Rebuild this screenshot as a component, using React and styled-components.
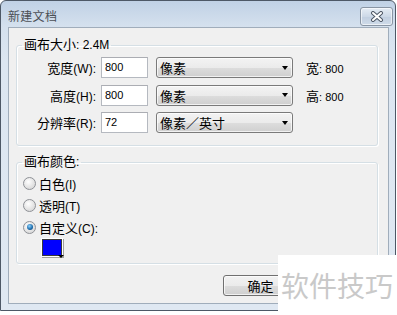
import React from "react";
import styled, { createGlobalStyle } from "styled-components";

const Global = createGlobalStyle`
  html, body {
    margin: 0;
    padding: 0;
    background: #ffffff;
  }
  body {
    font-family: "Liberation Sans", "Noto Sans CJK SC", sans-serif;
    font-size: 13px;
    color: #000;
  }
`;

const Page = styled.div`
  position: relative;
  width: 397px;
  height: 315px;
  overflow: hidden;
`;

const Window = styled.div`
  width: 394px;
  height: 309px;
  border: 1px solid #4d5866;
  border-radius: 6px 6px 0 0;
  background: linear-gradient(#c0d1e5, #d5e1ee 26px, #dce6f1 60px, #dfe8f2);
  display: flex;
  flex-direction: column;
`;

const TitleBar = styled.div`
  height: 26px;
  display: flex;
  align-items: center;
  justify-content: space-between;
  padding: 0 2px 0 7px;
`;

const Title = styled.span`
  font-size: 12px;
  color: #4b4f55;
  letter-spacing: 0.3px;
  margin-top: 3px;
`;

const CloseBtn = styled.div`
  width: 31px;
  height: 17px;
  margin-top: 4px;
  border: 1px solid #8995a4;
  border-radius: 3px;
  background: linear-gradient(#e6edf5, #cdd9e7 50%, #c1cfe0 51%, #cfdbe9);
  box-shadow: inset 0 0 0 1px rgba(255, 255, 255, 0.6);
  display: flex;
  align-items: center;
  justify-content: center;
`;

const Client = styled.div`
  flex: 1;
  margin: 0 6px 6px 7px;
  border: 1px solid #a0adbb;
  background: #f0f0f0;
  padding: 0 10px 0 7px;
  display: flex;
  flex-direction: column;
`;

const Group = styled.fieldset`
  margin: ${(p) => p.$top}px 0 0 0;
  padding: ${(p) => p.$pad};
  border: 1px solid #d5dfe5;
  border-radius: 3px;
  box-shadow: inset 1px 1px 0 #ffffff, 1px 1px 0 #ffffff;
  min-width: 0;
`;

const Legend = styled.legend`
  margin-left: 5px;
  padding: 0 2px;
  line-height: 16px;
  font-size: 13px;
`;

const Lat = styled.span`
  font-size: 12px;
`;

const Grid = styled.div`
  display: grid;
  grid-template-columns: 84px 47px 145px auto;
  grid-auto-rows: 21px;
  row-gap: 6.5px;
  align-items: center;
`;

const Label = styled.span`
  text-align: right;
  padding-right: 5px;
`;

const Input = styled.div`
  height: 19px;
  border: 1px solid #b5b9c0;
  border-top-color: #abadb3;
  background: #fff;
  font-size: 11px;
  line-height: 19px;
  padding-left: 3px;
`;

const Select = styled.div`
  margin-left: 8px;
  height: 19px;
  border: 1px solid #7a7a7a;
  border-radius: 3px;
  background: linear-gradient(#f3f3f3, #ebebeb 50%, #dddddd 51%, #cfcfcf);
  box-shadow: inset 0 0 0 1px rgba(255, 255, 255, 0.7);
  display: flex;
  align-items: center;
  justify-content: space-between;
  padding: 0 4px 0 3px;
`;

const Arrow = styled.span`
  width: 0;
  height: 0;
  border-left: 3.5px solid transparent;
  border-right: 3.5px solid transparent;
  border-top: 4px solid #000;
`;

const Info = styled.span`
  margin-left: 13px;
  & > span {
    font-size: 11px;
  }
`;

const RadioList = styled.div`
  display: flex;
  flex-direction: column;
  gap: 6px;
  padding-left: 6px;
`;

const RadioRow = styled.label`
  display: flex;
  align-items: center;
  height: 16px;
  gap: 3px;
`;

const RadioDot = styled.span`
  width: 11px;
  height: 11px;
  border-radius: 50%;
  border: 1px solid #8e9196;
  background: radial-gradient(circle at 40% 35%, #ffffff, #dcdcdc 70%, #f4f4f4);
  display: flex;
  align-items: center;
  justify-content: center;
  &::after {
    content: "";
    display: ${(p) => (p.$on ? "block" : "none")};
    width: 6px;
    height: 6px;
    border-radius: 50%;
    background: radial-gradient(circle at 40% 35%, #8cd2ff, #1b6aa8 60%, #0d3d6e);
  }
`;

const Swatch = styled.div`
  position: relative;
  width: 18px;
  height: 15px;
  margin: 4px 0 0 25px;
  background: #0000ff;
  border: 1px solid #3b3b3b;
  box-shadow: 0 0 0 1px #ffffff, 1px 1px 0 1px #a0a0a0;
`;

const SwatchArrow = styled.span`
  position: absolute;
  right: -3px;
  bottom: -3px;
  width: 0;
  height: 0;
  border-left: 3px solid transparent;
  border-right: 3px solid transparent;
  border-top: 3px solid #000;
`;

const Footer = styled.div`
  display: flex;
  margin-top: 11px;
  padding-left: 207px;
`;

const Button = styled.div`
  width: 73px;
  height: 19px;
  border: 1px solid #707070;
  border-radius: 3px;
  background: linear-gradient(#f2f2f2, #ebebeb 50%, #dddddd 51%, #cfcfcf);
  box-shadow: inset 0 0 0 1px rgba(255, 255, 255, 0.7);
  display: flex;
  align-items: center;
  justify-content: center;
  font-size: 13px;
`;

const Watermark = styled.div`
  position: absolute;
  left: 278px;
  top: 255px;
  width: 119px;
  height: 60px;
  background: #ffffff;
  display: flex;
  align-items: center;
  padding-left: 3px;
  box-sizing: border-box;
  font-family: "Noto Sans CJK SC", sans-serif;
  font-size: 28px;
  color: #c9c9c9;
`;

const rows = [
  { cn: "宽度", key: "(W):", value: "800", unit: "像素", info: ["宽", "800"] },
  { cn: "高度", key: "(H):", value: "800", unit: "像素", info: ["高", "800"] },
  { cn: "分辨率", key: "(R):", value: "72", unit: "像素／英寸" },
];

const radios = [
  { cn: "白色", key: "(I)" },
  { cn: "透明", key: "(T)" },
  { cn: "自定义", key: "(C):", on: true },
];

export default function App() {
  return (
    <Page>
      <Global />
      <Window>
        <TitleBar>
          <Title>新建文档</Title>
          <CloseBtn>
            <svg width="14" height="11" viewBox="0 0 14 11">
              <path d="M3 2 L11 9 M11 2 L3 9" stroke="#4e5866" strokeWidth="4" strokeLinecap="round" />
              <path d="M3 2 L11 9 M11 2 L3 9" stroke="#ffffff" strokeWidth="2" strokeLinecap="round" />
            </svg>
          </CloseBtn>
        </TitleBar>
        <Client>
          <Group $top={9} $pad="4px 0 12px 0">
            <Legend>
              画布大小<Lat>: 2.4M</Lat>
            </Legend>
            <Grid>
              {rows.map((r) => (
                <React.Fragment key={r.cn}>
                  <Label>
                    {r.cn}
                    <Lat>{r.key}</Lat>
                  </Label>
                  <Input>{r.value}</Input>
                  <Select>
                    <span>{r.unit}</span>
                    <Arrow />
                  </Select>
                  <Info>
                    {r.info && (
                      <>
                        {r.info[0]}
                        <span>: {r.info[1]}</span>
                      </>
                    )}
                  </Info>
                </React.Fragment>
              ))}
            </Grid>
          </Group>
          <Group $top={8} $pad="5px 0 7px 0">
            <Legend>
              画布颜色<Lat>:</Lat>
            </Legend>
            <RadioList>
              {radios.map((r) => (
                <RadioRow key={r.cn}>
                  <RadioDot $on={r.on} />
                  <span>
                    {r.cn}
                    <Lat>{r.key}</Lat>
                  </span>
                </RadioRow>
              ))}
            </RadioList>
            <Swatch>
              <SwatchArrow />
            </Swatch>
          </Group>
          <Footer>
            <Button>确定</Button>
          </Footer>
        </Client>
      </Window>
      <Watermark>软件技巧</Watermark>
    </Page>
  );
}
